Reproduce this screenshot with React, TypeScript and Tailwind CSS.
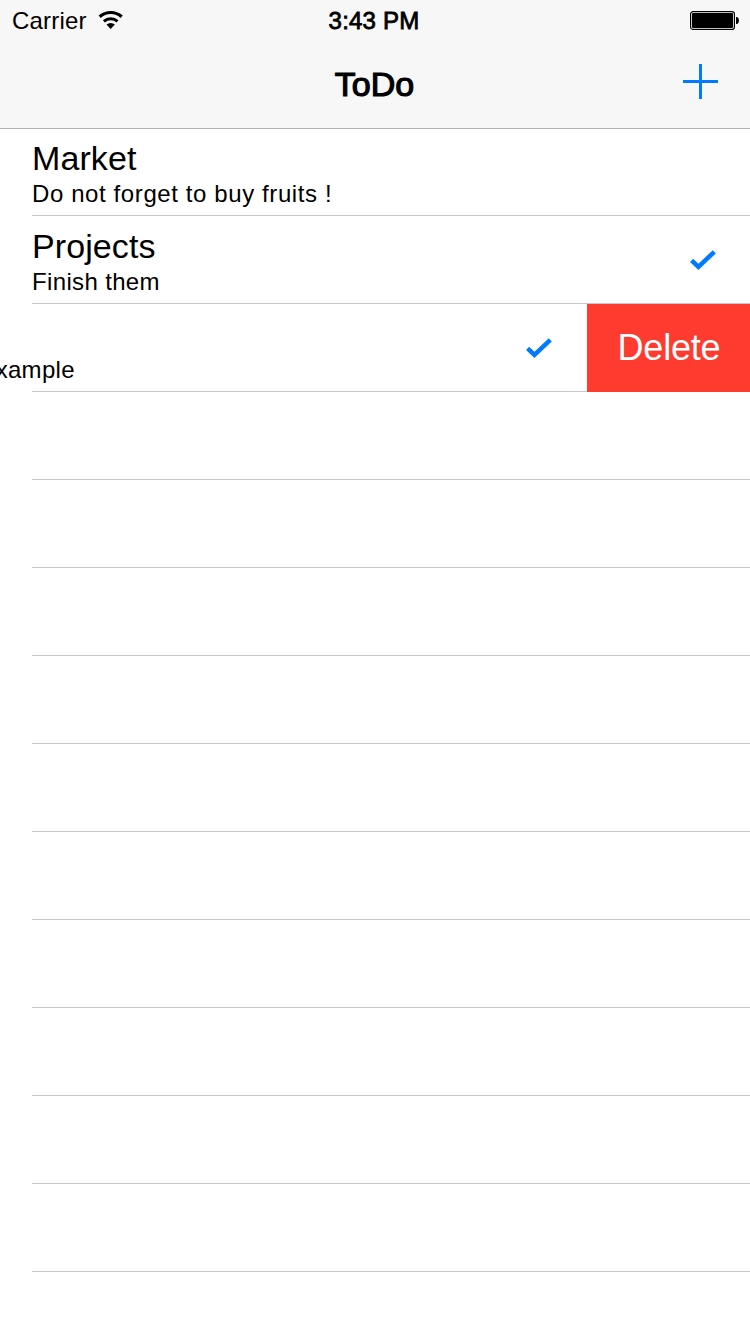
import React from "react";

type Todo = { title: string; note: string; done: boolean; noteClass: string };

const todos: Todo[] = [
  { title: "Market", note: "Do not forget to buy fruits !", done: false, noteClass: "tracking-[0.6px]" },
  { title: "Projects", note: "Finish them", done: true, noteClass: "tracking-[0.35px]" },
];

const emptyRows = Array.from({ length: 10 }, (_, i) => i);

function Wifi() {
  return (
    <svg width="26" height="20" viewBox="0 0 26 20" className="ml-[10px] mt-[10px] shrink-0">
      <path d="M1.66 6.74 A16.5 16.5 0 0 1 23.74 6.74" fill="none" stroke="#000" strokeWidth="3.1" />
      <path d="M5.9 11.4 A10.2 10.2 0 0 1 19.5 11.4" fill="none" stroke="#000" strokeWidth="3" />
      <path d="M12.7 19 L8.5 14.5 A6.3 6.3 0 0 1 16.9 14.5 Z" fill="#000" />
    </svg>
  );
}

function Battery() {
  return (
    <svg width="50" height="20" viewBox="0 0 50 20" className="mt-[11px]">
      <rect x="0.6" y="0.6" width="43.8" height="17.8" rx="2.5" fill="#fff" stroke="#000" strokeWidth="1.2" />
      <rect x="2" y="2" width="41" height="15" rx="1" fill="#000" />
      <path d="M46 6 h1 q2 0.8 2 3.5 t-2 3.5 h-1 z" fill="#000" />
    </svg>
  );
}

function Check() {
  return (
    <svg width="26" height="20" viewBox="0 0 26 20" className="shrink-0">
      <path d="M1.6 10.3 L8.4 16.8 L24.3 1.8" fill="none" stroke="#007aff" strokeWidth="4.5" />
    </svg>
  );
}

function Row({ todo, first }: { todo: Todo; first: boolean }) {
  return (
    <li className={first ? "h-[87px] pl-8" : "h-[88px] pl-8"}>
      <div className="flex h-full items-end justify-between border-b border-[#c8c7cc] pr-[34px]">
        <div className="pb-[6px]">
          <div className="h-10 text-[34px] leading-[38px] tracking-[0.1px]">{todo.title}</div>
          <div className={`h-[30px] whitespace-nowrap text-[24px] leading-[30px] ${todo.noteClass}`}>{todo.note}</div>
        </div>
        {todo.done && (
          <div className="self-center">
            <Check />
          </div>
        )}
      </div>
    </li>
  );
}

export default function App() {
  return (
    <div className="h-[1334px] w-[750px] overflow-hidden bg-white font-['Liberation_Sans',Arial,sans-serif] text-black">
      <header className="h-[129px] border-b border-[#b2b2b2] bg-[#f7f7f7]">
        <div className="grid h-10 grid-cols-3">
          <div className="flex items-start pl-3">
            <span className="mt-[6px] w-[76px] whitespace-nowrap text-[24px] leading-[30px] tracking-[0.2px]">Carrier</span>
            <Wifi />
          </div>
          <div className="mt-[6px] pr-[2px] text-center text-[24px] leading-[30px] tracking-[0.2px] [-webkit-text-stroke:0.8px_#000]">3:43 PM</div>
          <div className="flex items-start justify-end pr-[10px]">
            <Battery />
          </div>
        </div>
        <div className="grid h-[88px] grid-cols-3">
          <div />
          <h1 className="pr-px pt-6 text-center text-[34px] leading-10 [-webkit-text-stroke:1.2px_#000]">ToDo</h1>
          <div className="flex justify-end pr-8 pt-6">
            <svg width="35" height="35" viewBox="0 0 35 35">
              <path d="M0 17.5H35M17.5 0V35" stroke="#007aff" strokeWidth="3" />
            </svg>
          </div>
        </div>
      </header>
      <ul>
        {todos.map((todo, i) => (
          <Row key={todo.title} todo={todo} first={i === 0} />
        ))}
        <li className="flex h-[88px]">
          <div className="flex w-8 shrink-0 items-end pb-[7px]">
            <span className="-ml-[18px] whitespace-nowrap text-[24px] leading-[30px] tracking-[0.3px]">example</span>
          </div>
          <div className="flex flex-1 items-center justify-end border-b border-[#c8c7cc] pr-[35px]">
            <Check />
          </div>
          <div className="flex w-[163px] items-center justify-center bg-[#ff3b30] pl-px text-[36px] leading-10 tracking-[-0.2px] text-white">
            Delete
          </div>
        </li>
        {emptyRows.map((i) => (
          <li key={i} className="h-[88px] pl-8">
            <div className="h-full border-b border-[#c8c7cc]" />
          </li>
        ))}
      </ul>
    </div>
  );
}
